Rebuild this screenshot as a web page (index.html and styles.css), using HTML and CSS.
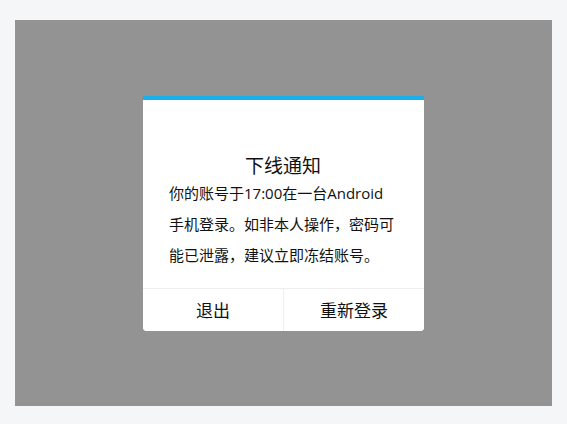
FILE: index.html
```html
<!DOCTYPE html>
<html lang="zh-CN">

<head>
    <meta charset="UTF-8">
    <meta name="viewport" content="width=device-width, initial-scale=1.0">
    <title>下线通知</title>
    <link rel="stylesheet" href="styles.css">
</head>

<body>
    <div class="mask">
        <div class="dialog">
            <div class="dialog-body">
                <h3 class="dialog-title">下线通知</h3>
                <p class="dialog-text">你的账号于17:00在一台Android手机登录。如非本人操作，密码可能已泄露，建议立即冻结账号。</p>
            </div>
            <div class="dialog-buttons">
                <button class="dialog-btn">退出</button>
                <button class="dialog-btn">重新登录</button>
            </div>
        </div>
    </div>
</body>

</html>
```

FILE: styles.css
```css
body {
    margin: 0;
    padding: 20px 15px 18px;
    background-color: #f5f6f8;
    font-family: "Open Sans", "Noto Sans CJK SC", sans-serif;
    color: #111;
}

/* gray backdrop behind the dialog */
.mask {
    height: 386px;
    background-color: #939393;
    display: flex;
    align-items: center;
    justify-content: center;
}

.dialog {
    width: 281px;
    background-color: #fff;
    border-top: 4px solid #18afea;
    border-radius: 0 0 4px 4px;
    overflow: hidden;
}

.dialog-body {
    padding: 55px 27px 17px 26px;
}

.dialog-title {
    margin: 0;
    font-size: 19px;
    font-weight: normal;
    line-height: 22px;
    text-align: center;
}

.dialog-text {
    margin: 1px 0 0;
    font-size: 15px;
    line-height: 31px;
}

.dialog-buttons {
    display: flex;
    border-top: 1px solid #eee;
}

.dialog-btn {
    flex: 1;
    height: 42px;
    padding: 0;
    border: none;
    background-color: #fff;
    font-family: inherit;
    font-size: 17px;
    color: #111;
    cursor: pointer;
}

.dialog-btn + .dialog-btn {
    border-left: 1px solid #eee;
}
```
